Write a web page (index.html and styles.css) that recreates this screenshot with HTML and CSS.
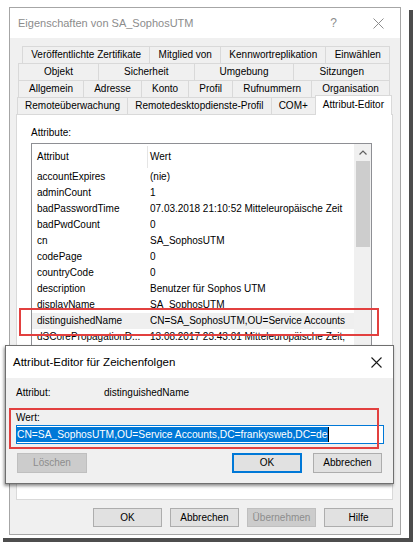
FILE: index.html
```html
<!DOCTYPE html>
<html lang="de">
<head>
<meta charset="utf-8">
<title>Eigenschaften von SA_SophosUTM</title>
<link rel="stylesheet" href="styles.css">
</head>
<body>
<div class="page">
  <div class="window">
    <div class="titlebar">
      <span class="title">Eigenschaften von SA_SophosUTM</span>
      <span class="tb-help">?</span>
      <svg class="tb-close" width="11" height="11" viewBox="0 0 11 11"><path d="M0.5 0.5L10.5 10.5M10.5 0.5L0.5 10.5" stroke="#8c8c8c" stroke-width="1" fill="none"/></svg>
    </div>
    <div class="tabs">
      <div class="tabrow r1">
        <div class="tab">Veröffentlichte Zertifikate</div>
        <div class="tab">Mitglied von</div>
        <div class="tab">Kennwortreplikation</div>
        <div class="tab">Einwählen</div>
      </div>
      <div class="tabrow r2">
        <div class="tab">Objekt</div>
        <div class="tab">Sicherheit</div>
        <div class="tab">Umgebung</div>
        <div class="tab">Sitzungen</div>
      </div>
      <div class="tabrow r3">
        <div class="tab">Allgemein</div>
        <div class="tab">Adresse</div>
        <div class="tab">Konto</div>
        <div class="tab">Profil</div>
        <div class="tab">Rufnummern</div>
        <div class="tab">Organisation</div>
      </div>
      <div class="tabrow r4">
        <div class="tab">Remoteüberwachung</div>
        <div class="tab">Remotedesktopdienste-Profil</div>
        <div class="tab">COM+</div>
        <div class="tab sel">Attribut-Editor</div>
      </div>
    </div>
    <div class="panel">
      <div class="attr-lbl">Attribute:</div>
      <div class="list">
        <div class="list-main">
          <div class="lhead"><span class="c1">Attribut</span><span class="c2">Wert</span></div>
          <div class="lrow"><span>accountExpires</span><span>(nie)</span></div>
          <div class="lrow"><span>adminCount</span><span>1</span></div>
          <div class="lrow"><span>badPasswordTime</span><span>07.03.2018 21:10:52 Mitteleuropäische Zeit</span></div>
          <div class="lrow"><span>badPwdCount</span><span>0</span></div>
          <div class="lrow"><span>cn</span><span>SA_SophosUTM</span></div>
          <div class="lrow"><span>codePage</span><span>0</span></div>
          <div class="lrow"><span>countryCode</span><span>0</span></div>
          <div class="lrow"><span>description</span><span>Benutzer für Sophos UTM</span></div>
          <div class="lrow"><span>displayName</span><span>SA_SophosUTM</span></div>
          <div class="lrow hl"><span>distinguishedName</span><span>CN=SA_SophosUTM,OU=Service Accounts</span></div>
          <div class="lrow"><span>dSCorePropagationD...</span><span>13.08.2017 23:43:01 Mitteleuropäische Zeit;</span></div>
        </div>
        <div class="vscroll">
          <div class="sb-up"><svg width="8" height="5" viewBox="0 0 8 5"><path d="M0.5 4.5L4 1L7.5 4.5" stroke="#606060" stroke-width="1.2" fill="none"/></svg></div>
          <div class="sb-thumb"></div>
        </div>
      </div>
    </div>
    <div class="buttons">
      <button class="btn">OK</button>
      <button class="btn">Abbrechen</button>
      <button class="btn disabled">Übernehmen</button>
      <button class="btn">Hilfe</button>
    </div>
  </div>

  <div class="redbox rb1"></div>

  <div class="dialog">
    <div class="dlg-title">
      <span class="dlg-caption">Attribut-Editor für Zeichenfolgen</span>
      <svg class="dlg-close" width="11" height="11" viewBox="0 0 11 11"><path d="M0.5 0.5L10.5 10.5M10.5 0.5L0.5 10.5" stroke="#1a1a1a" stroke-width="1.1" fill="none"/></svg>
    </div>
    <div class="dlg-body">
      <div class="dlg-attr"><span class="dlg-key">Attribut:</span><span>distinguishedName</span></div>
      <div class="dlg-wert">Wert:</div>
      <div class="tbox"><span class="seltext">CN=SA_SophosUTM,OU=Service Accounts,DC=frankysweb,DC=de</span><span class="caret"></span></div>
      <div class="dlg-btns">
        <button class="btn dbtn disabled">Löschen</button>
        <button class="btn dbtn default">OK</button>
        <button class="btn dbtn cancel">Abbrechen</button>
      </div>
    </div>
  </div>

  <div class="redbox rb2"></div>

  <div class="shadow-r"></div>
  <div class="shadow-b"></div>
</div>
</body>
</html>
```
FILE: styles.css
```css
* { box-sizing: border-box; margin: 0; padding: 0; }
html, body { width: 415px; height: 543px; overflow: hidden; background: #fff; }
body { font-family: "Liberation Sans", Arial, sans-serif; font-size: 10px; color: #000; }

.page { position: relative; width: 415px; height: 543px; padding: 7px 0 0 9px; }

.window {
  width: 392px; height: 528px;
  border: 1px solid #a6a6a6;
  background: #f0f0f0;
  display: flex; flex-direction: column;
}

.titlebar {
  height: 30px; background: #fff;
  display: flex; align-items: center;
  padding-left: 8px;
  font-size: 11px; color: #8c8c8c;
}
.title { flex: 1; }
.tb-help { font-size: 12px; margin-right: 36px; }
.tb-close { margin-right: 16px; }

.tabs { margin-top: 8px; }
.tabrow { display: flex; height: 17px; }
.r1 { margin-left: 12px; width: 368px; }
.r2 { margin-left: 8px; width: 372px; }
.r3 { margin-left: 8px; width: 372px; }
.r4 { margin-left: 7px; width: 375px; }
.tab {
  flex: 1 1 auto;
  border-top: 1px solid #d9d9d9;
  border-left: 1px solid #d9d9d9;
  text-align: center;
  line-height: 16px;
  white-space: nowrap;
}
.tab:last-child { border-right: 1px solid #d9d9d9; }
.tab.sel {
  background: #fff;
  height: 20px;
  margin-top: -2px;
  margin-bottom: -1px;
  position: relative;
  z-index: 1;
  line-height: 17px;
}

.panel {
  margin-left: 6px;
  width: 377px; height: 386px;
  background: #fff;
  border: 1px solid #d9d9d9;
  padding: 12px 0 0 14px;
}
.attr-lbl { height: 12px; line-height: 12px; }
.list {
  margin-top: 4px;
  width: 341px; height: 326px;
  border: 1px solid #8e8f94;
  display: flex;
  background: #fff;
}
.list-main { flex: 1; overflow: hidden; }
.lhead { display: grid; grid-template-columns: 116px 1fr; height: 25px; align-items: center; }
.lhead .c1 { padding-left: 5px; height: 22px; line-height: 22px; border-right: 1px solid #e5e5e5; }
.lhead .c2 { padding-left: 2px; }
.lrow { display: grid; grid-template-columns: 118px 1fr; height: 16px; line-height: 16px; white-space: nowrap; }
.lrow span { overflow: hidden; }
.lrow span:first-child { padding-left: 5px; }
.lrow.hl { background: #efefef; }

.vscroll { width: 17px; background: #f0f0f0; display: flex; flex-direction: column; align-items: center; }
.sb-up { height: 17px; width: 17px; display: flex; align-items: center; justify-content: center; }
.sb-thumb { width: 14px; height: 86px; background: #cdcdcd; }

.buttons { margin-top: 8px; display: flex; justify-content: flex-end; gap: 8px; padding-right: 7px; }
.btn {
  width: 69px; height: 19px;
  border: 1px solid #adadad;
  background: #e1e1e1;
  font-family: "Liberation Sans", Arial, sans-serif;
  font-size: 10px; line-height: 17px;
  color: #000; text-align: center;
}
.btn.disabled { background: #cccccc; border-color: #bfbfbf; color: #8d8d8d; }

.dialog {
  position: absolute; left: 5px; top: 345px;
  width: 389px; height: 139px;
  border: 1px solid #6f6f6f;
  background: #f0f0f0;
  box-shadow: -1px 2px 3px rgba(0,0,0,0.45);
  z-index: 5;
}
.dlg-title {
  height: 32px; background: #fff;
  display: flex; align-items: center;
  padding-left: 7px;
  font-size: 11.5px; color: #000;
}
.dlg-caption { flex: 1; }
.dlg-close { margin-right: 11px; }
.dlg-body { padding: 9px 9px 0 10px; }
.dlg-attr { display: flex; line-height: 12px; height: 12px; }
.dlg-key { width: 88px; }
.dlg-wert { margin-top: 13px; line-height: 12px; height: 12px; }
.tbox {
  margin-top: 1px; height: 19px;
  border: 1px solid #0078d7;
  background: #fff;
  display: flex; align-items: center;
  white-space: nowrap; overflow: hidden;
}
.seltext { background: #0078d7; color: #fff; font-size: 10.25px; line-height: 15px; padding-right: 1px; }
.caret { width: 1px; height: 15px; background: #000; }
.dlg-btns { display: flex; margin-top: 9px; }
.dbtn { width: 70px; height: 20px; line-height: 18px; }
.dbtn.disabled { margin-left: 1px; margin-right: auto; }
.dbtn.default { border: 1px solid #0078d7; box-shadow: inset 0 0 0 1px #0078d7; }
.dbtn.cancel { width: 69px; margin-left: 11px; margin-right: 2px; }

.redbox { position: absolute; border: 2px solid #e2403f; z-index: 6; }
.rb1 { left: 19px; top: 308px; width: 360px; height: 28px; }
.rb2 { left: 9px; top: 408px; width: 370px; height: 41px; }

.shadow-r { position: absolute; left: 409px; top: 10px; width: 4px; height: 531px; background: #4d4d4d; }
.shadow-b { position: absolute; left: 3px; top: 538px; width: 410px; height: 4px; background: #4d4d4d; }
```
